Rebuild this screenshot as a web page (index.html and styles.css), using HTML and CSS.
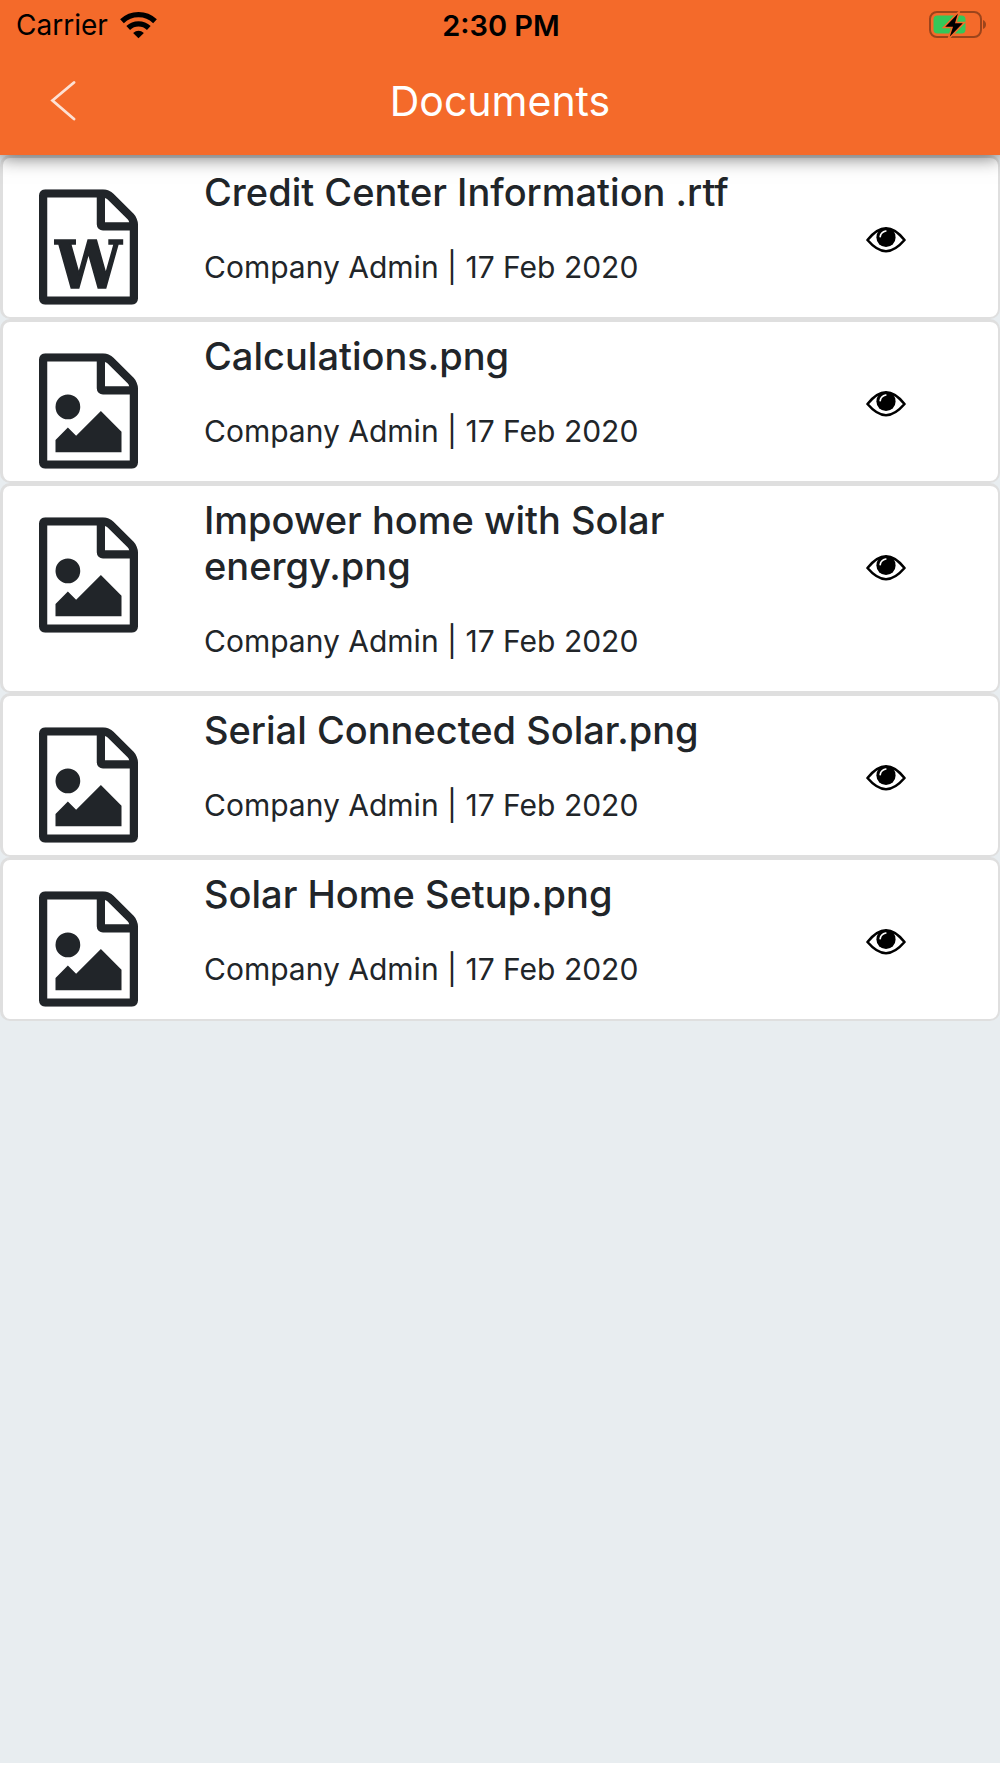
FILE: index.html
```html
<!DOCTYPE html>
<html lang="en">
	<head>
		<meta charset="utf-8">
		<meta name="viewport" content="width=device-width, initial-scale=1">
		<title>Documents</title>
		<link rel="stylesheet" href="styles.css">
	</head>
	<body>
		<!-- shared icons -->
		<svg class="sprite" aria-hidden="true">
			<symbol id="file" viewBox="0 0 1536 1792">
				<path d="M1468 380q28 28 48 76t20 88v1152q0 40-28 68t-68 28h-1344q-40 0-68-28t-28-68v-1600q0-40 28-68t68-28h896q40 0 88 20t76 48zm-444-244v376h376q-10-29-22-41l-313-313q-12-12-41-22zm384 1528v-1024h-416q-40 0-68-28t-28-68v-416h-768v1536h1280z"/>
			</symbol>
			<symbol id="file-image" viewBox="0 0 1536 1792">
				<use href="#file"/>
				<path d="M1280 1216v320h-1024v-192l192-192 128 128 384-384zm-832-192q-80 0-136-56t-56-136 56-136 136-56 136 56 56 136-56 136-136 56z"/>
			</symbol>
			<symbol id="eye" viewBox="0 0 40 26">
				<path d="M1.5 13C8 5 14 1.4 20 1.4S32 5 38.5 13C32 20.6 26 24.2 20 24.2S8 20.6 1.5 13z" fill="none" stroke="#000" stroke-width="2.6" stroke-linejoin="round"/>
				<circle cx="20" cy="10.4" r="9.6"/>
				<path d="M14.2 9.6q.6-4.6 5.6-5.6" fill="none" stroke="#fff" stroke-width="1.7" stroke-linecap="round"/>
			</symbol>
		</svg>

		<header class="header">
			<div class="status">
				<div class="carrier">
					<span>Carrier</span>
					<svg class="wifi" viewBox="0 0 37 28" aria-hidden="true">
						<g fill="none" stroke="#000" stroke-width="5.4">
							<path d="M2 10.2a24 24 0 0 1 33 0"/>
							<path d="M8.2 17a15 15 0 0 1 20.6 0"/>
						</g>
						<path d="M18.5 27.3l-5.4-5.2q5.4-4.6 10.8 0z"/>
					</svg>
				</div>
				<span class="time">2:30 PM</span>
				<svg class="battery" viewBox="0 0 60 30" aria-hidden="true">
					<rect x="4" y="2" width="51" height="25" rx="7" fill="none" stroke="#9c441b" stroke-width="2"/>
					<path d="M57 10q3 1.5 3 4.5t-3 4.5z" fill="#9c441b"/>
					<rect x="7.5" y="5.5" width="32" height="18" rx="4" fill="#34c759"/>
					<path d="M33.500 1l-16 16.5h8.5l-4 12 16.5-17h-8.5z" fill="#000" stroke="#f46a2a" stroke-width="1.5"/>
				</svg>
			</div>
			<div class="bar">
				<a class="back" href="#" aria-label="Back">
					<svg viewBox="0 0 27 40" aria-hidden="true"><path d="M24 1.5L2.5 19.5 24 38"/></svg>
				</a>
				<h1>Documents</h1>
			</div>
		</header>

		<main class="list">
			<article class="card">
				<svg class="file" viewBox="0 0 1536 1792" aria-hidden="true">
					<use href="#file"/>
					<text class="letter" x="768" y="1525">W</text>
				</svg>
				<div class="info">
					<h2>Credit Center Information .rtf</h2>
					<p>Company Admin | 17 Feb 2020</p>
				</div>
				<a class="view" href="#" aria-label="View Credit Center Information .rtf"><svg aria-hidden="true"><use href="#eye"/></svg></a>
			</article>
			<article class="card">
				<svg class="file" aria-hidden="true"><use href="#file-image"/></svg>
				<div class="info">
					<h2>Calculations.png</h2>
					<p>Company Admin | 17 Feb 2020</p>
				</div>
				<a class="view" href="#" aria-label="View Calculations.png"><svg aria-hidden="true"><use href="#eye"/></svg></a>
			</article>
			<article class="card">
				<svg class="file" aria-hidden="true"><use href="#file-image"/></svg>
				<div class="info">
					<h2>Impower home with Solar energy.png</h2>
					<p>Company Admin | 17 Feb 2020</p>
				</div>
				<a class="view" href="#" aria-label="View Impower home with Solar energy.png"><svg aria-hidden="true"><use href="#eye"/></svg></a>
			</article>
			<article class="card">
				<svg class="file" aria-hidden="true"><use href="#file-image"/></svg>
				<div class="info">
					<h2>Serial Connected Solar.png</h2>
					<p>Company Admin | 17 Feb 2020</p>
				</div>
				<a class="view" href="#" aria-label="View Serial Connected Solar.png"><svg aria-hidden="true"><use href="#eye"/></svg></a>
			</article>
			<article class="card">
				<svg class="file" aria-hidden="true"><use href="#file-image"/></svg>
				<div class="info">
					<h2>Solar Home Setup.png</h2>
					<p>Company Admin | 17 Feb 2020</p>
				</div>
				<a class="view" href="#" aria-label="View Solar Home Setup.png"><svg aria-hidden="true"><use href="#eye"/></svg></a>
			</article>
		</main>
	</body>
</html>
```

FILE: styles.css
```css
* {box-sizing:border-box;}
html {background-color:#fff;}
body {margin:0;min-height:100vh;border-bottom:15px solid #fff;background-color:#e8edf0;font-family:Inter,"Liberation Sans",sans-serif;color:#212529;}
h1, h2, p {margin:0;}
svg {display:block;}
.sprite {display:none;}

/* header */
.header {position:relative;z-index:1;height:155px;background-color:#f46a2a;box-shadow:0 2px 18px rgba(0,0,0,.6);}
.status {display:grid;grid-template-columns:1fr auto 1fr;align-items:center;height:50px;padding:0 14px 0 16px;font-size:28px;color:#000;}
.carrier {display:flex;align-items:center;gap:12px;}
.wifi {width:37px;height:28px;}
.time {font-size:29px;font-weight:600;}
.battery {width:60px;height:30px;justify-self:end;}
.bar {display:grid;grid-template-columns:1fr auto 1fr;align-items:center;height:102px;padding:0 50px;}
.back {justify-self:start;}
.back svg {width:27px;height:40px;}
.back path {fill:none;stroke:#fff;stroke-opacity:.8;stroke-width:2.8;stroke-linecap:round;}
.bar h1 {font-size:41px;font-weight:400;line-height:50px;color:#fff;}

/* document cards */
.card {display:grid;grid-template-columns:201px 1fr 132px;align-items:start;padding:11px 0 12px;background-color:#fff;border:solid #dfdfdf;border-width:3px 2px 2px 3px;border-radius:10px;}
.file {width:99px;height:116px;margin:20px 0 0 36px;fill:#212529;}
.letter {font-family:"DejaVu Serif Condensed","DejaVu Serif",serif;font-size:1020px;font-weight:bold;text-anchor:middle;stroke:#212529;stroke-width:24px;}
.info {padding:0 60px 15px 0;}
.info h2 {font-size:38px;font-weight:500;line-height:46px;margin-bottom:30px;}
.info p {font-size:30px;line-height:45px;}
.view {margin-top:58px;}
.view svg {width:40px;height:26px;fill:#000;}
```
